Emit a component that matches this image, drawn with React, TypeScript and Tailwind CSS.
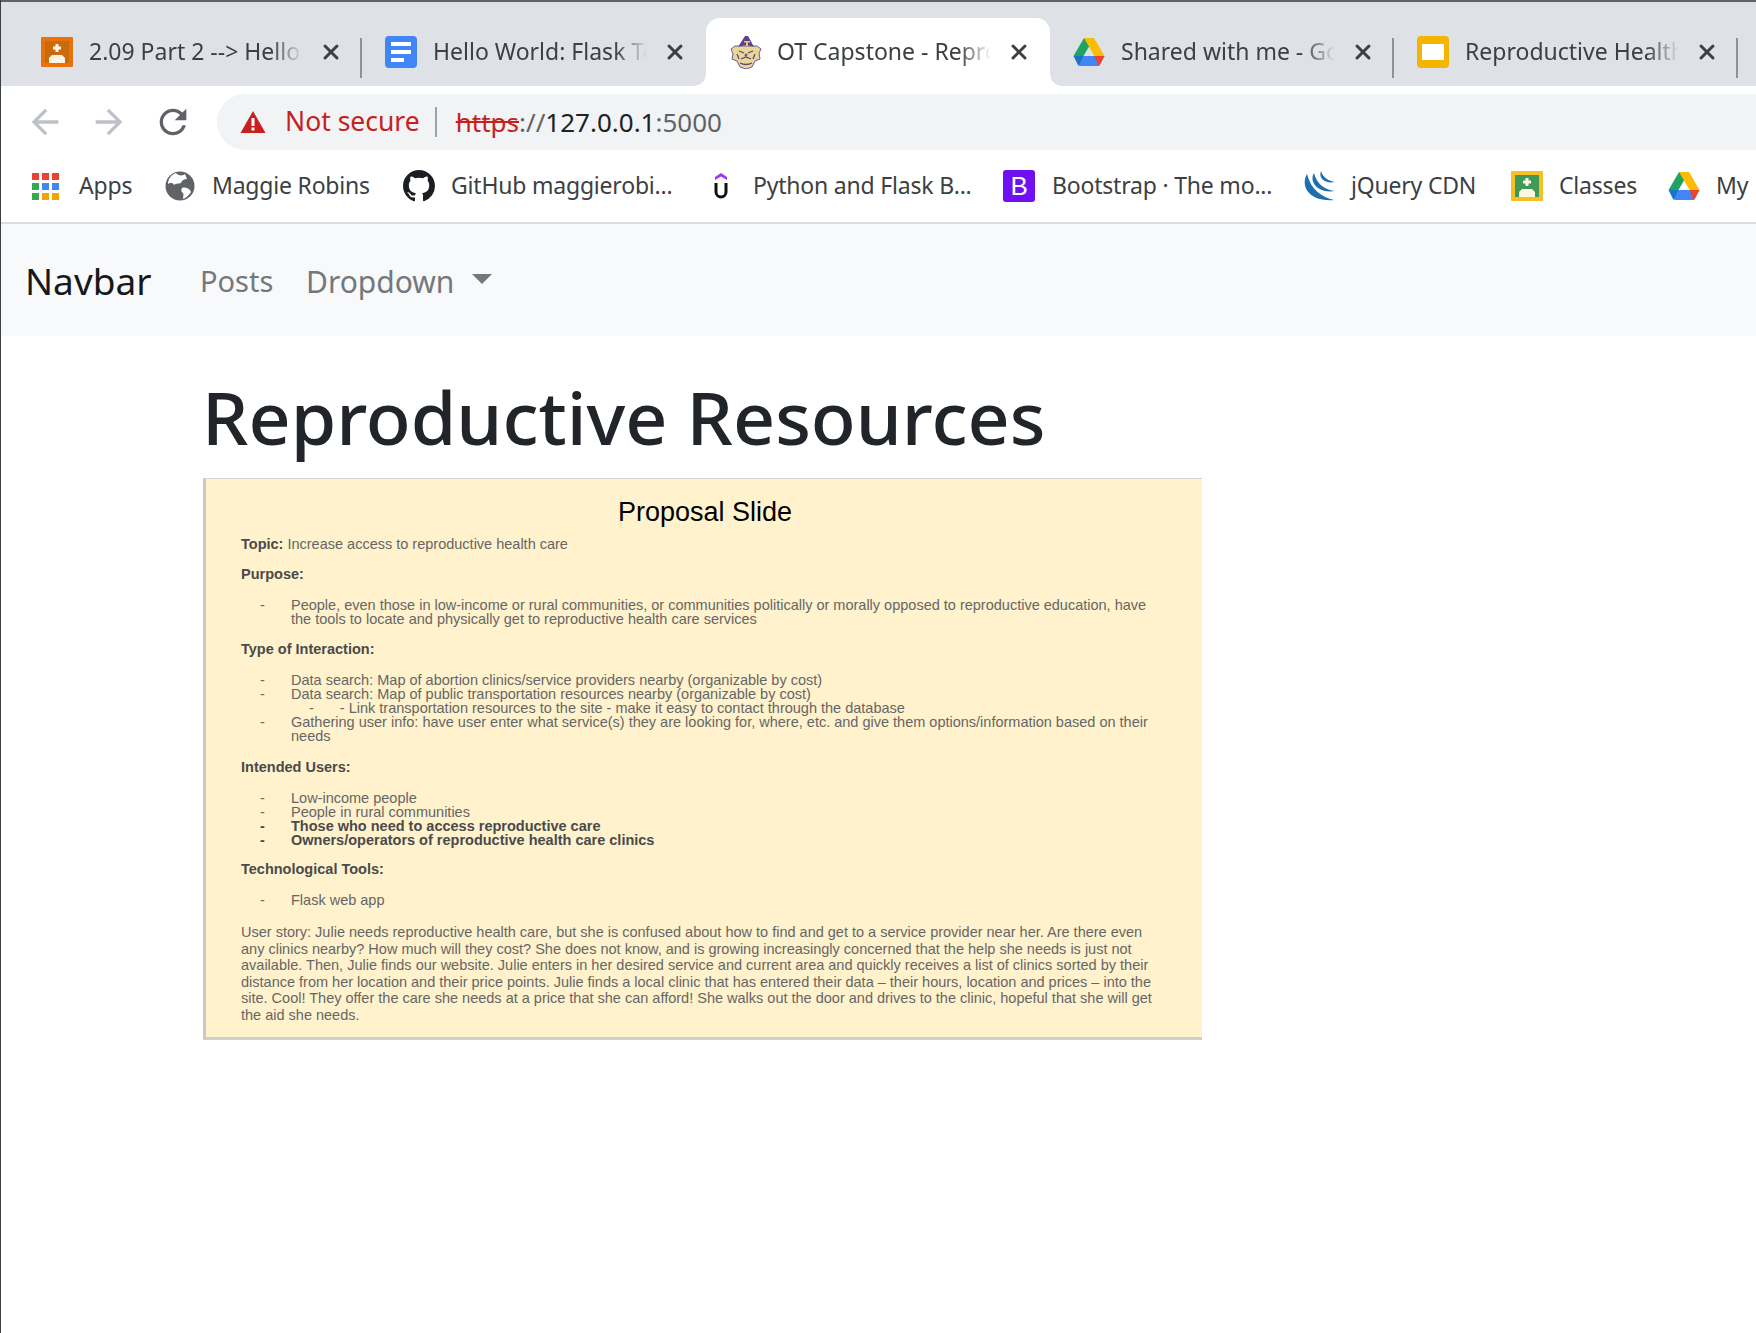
import { X } from 'lucide-react';

const UI = "font-['Noto_Sans',sans-serif]";
const SLIDE = "font-['Liberation_Sans',Arial,sans-serif]";

function ClassroomIcon({ outer, inner, fg }: { outer: string; inner: string; fg: string }) {
  return (
    <svg viewBox="0 0 32 30" className="w-8 h-[30px]">
      <rect width="32" height="30" rx="1" fill={outer} />
      <rect x="4" y="4" width="24" height="22" fill={inner} />
      <path d="M14.5 7h3v2.5H20v3h-2.500V15h-3v-2.500H12v-3h2.500z" fill={fg} />
      <path d="M8 26v-5l3-3h10l3 3v5z" fill={fg} />
    </svg>
  );
}

function DocsIcon() {
  return (
    <svg viewBox="0 0 32 32" className="w-8 h-8">
      <rect width="32" height="32" rx="4" fill="#4285f4" />
      <path d="M6 6h20v4H6zM6 14h20v4H6zM6 22h13v4H6z" fill="#fff" />
    </svg>
  );
}

function SlidesIcon() {
  return (
    <svg viewBox="0 0 32 32" className="w-8 h-8">
      <rect width="32" height="32" rx="4" fill="#f4b400" />
      <rect x="5" y="8" width="22" height="16" fill="#fff" />
    </svg>
  );
}

function DriveIcon() {
  return (
    <svg viewBox="0 0 32 28" className="w-8 h-7">
      <path d="M11 0h10L10.500 18H0.500z" fill="#1ea362" />
      <path d="M11 0h10l10.500 18h-10z" fill="#fbbc04" />
      <path d="M6 18h25.500l-5 9a2 2 0 0 1-1.700 1H7.500a2 2 0 0 1-1.700-1z" fill="#4285f4" />
      <path d="M0.500 18H10.500L5.500 28z" fill="#1a73c8" />
      <path d="M21.500 18h10l-4.500 8.500a3 3 0 0 1-1.500 1.500z" fill="#ea4335" />
    </svg>
  );
}

function Mascot() {
  return (
    <svg viewBox="0 0 34 34" className="w-[34px] h-[34px]">
      <path d="M6 11L2 14l2 5-1 5 5 2 3 6 6 2 6-2 3-6 5-2-1-6 2-4-4-3z" fill="#e9d69a" stroke="#6a5a9a" strokeWidth="1" />
      <path d="M9 12L16 1h3l6 11c-5-2-11-2-16 0z" fill="#5b3f95" />
      <path d="M15 6h6v1.500h-2V11h-2V7.500h-2z" fill="#f2c94c" />
      <path d="M10 16l5 2M24 16l-5 2M12 24l5-2 5 2M11 28c4 2 8 2 12 0M8 19l2 5M26 19l-2 5" stroke="#5a4a70" strokeWidth="1.300" fill="none" />
      <circle cx="17" cy="20" r="1.500" fill="#6a5a9a" />
    </svg>
  );
}

function AppsIcon() {
  const dots = ['#ea4335', '#ea4335', '#ea4335', '#34a853', '#4285f4', '#4285f4', '#34a853', '#f4a300', '#f4a300'];
  return (
    <div className="grid grid-cols-3 gap-[3px] w-[27px]">
      {dots.map((c, i) => (
        <svg key={i} viewBox="0 0 7 7" className="w-[7px] h-[7px]"><rect width="7" height="7" fill={c} /></svg>
      ))}
    </div>
  );
}

function GlobeIcon() {
  return (
    <svg viewBox="0 0 30 30" className="w-[30px] h-[30px]">
      <circle cx="15" cy="15" r="14.500" fill="#5f6368" />
      <path d="M11 2c2 3 7 3 9 1l2 5c-3 0-5 1-6 4-3 1-5 0-7 2-1-3-5-2-6-1 0-5 3-9 8-11zM17 17c3-1 6 0 8 2l1 2c-2 3-5 6-8 7 0-3 1-4 0-6-2-1-2-3-1-5z" fill="#fff" />
    </svg>
  );
}

function GithubIcon() {
  return (
    <svg viewBox="0 0 16 16" className="w-8 h-8" fill="#1b1f23">
      <path d="M8 0C3.580 0 0 3.580 0 8c0 3.540 2.290 6.530 5.470 7.590.4.070.55-.17.55-.38 0-.19-.01-.82-.01-1.490-2.010.37-2.530-.49-2.690-.94-.09-.23-.48-.94-.82-1.130-.28-.15-.68-.52-.01-.53.63-.01 1.080.58 1.230.82.72 1.210 1.870.87 2.330.66.070-.52.28-.87.51-1.070-1.780-.2-3.640-.89-3.640-3.950 0-.87.31-1.590.82-2.150-.08-.2-.36-1.020.08-2.120 0 0 .67-.21 2.200.82.64-.18 1.320-.27 2-.27s1.360.09 2 .27c1.530-1.040 2.200-.82 2.200-.82.44 1.100.16 1.920.08 2.120.51.560.82 1.270.82 2.150 0 3.070-1.870 3.750-3.650 3.950.29.250.54.730.54 1.480 0 1.070-.01 1.930-.01 2.200 0 .210.15.460.55.380A8.010 8.010 0 0 0 16 8c0-4.420-3.580-8-8-8z" />
    </svg>
  );
}

function UdemyIcon() {
  return (
    <svg viewBox="0 0 16 30" className="w-4 h-[30px]">
      <path d="M8 2l6 4v3L8 5.500 2 9V6z" fill="#a435f0" />
      <path d="M3 12v9a5 5 0 0 0 10 0v-9" fill="none" stroke="#111" strokeWidth="3" />
    </svg>
  );
}

function BootstrapIcon() {
  return (
    <div className="w-8 h-8 rounded-[3px] bg-[#6f10f2] flex items-center justify-center text-white text-[26px] leading-none font-['Liberation_Sans',sans-serif]">B</div>
  );
}

function JqueryIcon() {
  return (
    <svg viewBox="0 0 34 32" className="w-[34px] h-8" fill="#1f6fb0">
      <path d="M4 4C-3 16 6 32 31 30 19 27 8 20 4 4z" />
      <path d="M11 3C6 11 14 24 32 21 23 20 14 15 11 3z" />
      <path d="M18 1C15 9 23 14 32 12 26 11 20 8 18 1z" />
    </svg>
  );
}

const tabs = [
  { title: '2.09 Part 2 --> Hello', icon: <ClassroomIcon outer="#e8710a" inner="#c96a0c" fg="#fff4e4" /> },
  { title: 'Hello World: Flask Te', icon: <DocsIcon /> },
  { title: 'OT Capstone - Repro', icon: <Mascot />, active: true },
  { title: 'Shared with me - Go', icon: <DriveIcon /> },
  { title: 'Reproductive Health', icon: <SlidesIcon /> },
];

function Tab({ title, icon, active, sep }: { title: string; icon: React.ReactNode; active?: boolean; sep: boolean }) {
  return (
    <div className={`relative w-[344px] h-[68px] shrink-0 flex items-center rounded-t-[14px] ${active ? 'bg-white' : ''}`}>
      {active && <div className="absolute left-[-12px] bottom-0 w-3 h-3 bg-[radial-gradient(circle_at_0_0,#dee1e6_11.500px,#fff_12px)]" />}
      {active && <div className="absolute right-[-12px] bottom-0 w-3 h-3 bg-[radial-gradient(circle_at_100%_0,#dee1e6_11.500px,#fff_12px)]" />}
      <div className="w-[71px] pl-[23px] shrink-0 flex items-center">{icon}</div>
      <div className={`w-[214px] -mt-[2px] overflow-hidden whitespace-nowrap text-[23px] leading-8 text-[#3c4043] ${UI} [mask-image:linear-gradient(to_right,black_85%,transparent)]`}>{title}</div>
      <X className="ml-[16px] w-6 h-6 text-[#3c4043]" strokeWidth={3} />
      {sep && <div className="absolute right-0 top-[20px] w-[2px] h-[40px] bg-[#8e9297]" />}
    </div>
  );
}

const bookmarks = [
  { w: 'w-[164px]', pl: 'pl-[31px]', gap: 'w-[47px]', label: 'Apps', icon: <AppsIcon /> },
  { w: 'w-[238px]', pl: '', gap: 'w-[47px]', label: 'Maggie Robins', icon: <GlobeIcon /> },
  { w: 'w-[309px]', pl: '', gap: 'w-[48px]', label: 'GitHub maggierobi...', icon: <GithubIcon /> },
  { w: 'w-[291px]', pl: 'pl-[1px]', gap: 'w-[40px]', label: 'Python and Flask B...', icon: <UdemyIcon /> },
  { w: 'w-[300px]', pl: '', gap: 'w-[49px]', label: 'Bootstrap · The mo...', icon: <BootstrapIcon /> },
  { w: 'w-[208px]', pl: '', gap: 'w-[48px]', label: 'jQuery CDN', icon: <JqueryIcon /> },
  { w: 'w-[157px]', pl: '', gap: 'w-[48px]', label: 'Classes', icon: <ClassroomIcon outer="#f6bf26" inner="#3f9a55" fg="#fdf6e3" /> },
  { w: 'w-[88px]', pl: '', gap: 'w-[48px]', label: 'My', icon: <DriveIcon /> },
];

function SlideLine({ dash, bold, className, children }: { dash?: boolean; bold?: boolean; className?: string; children: React.ReactNode }) {
  return (
    <div className={`flex h-[14px] items-center whitespace-nowrap ${bold ? 'font-bold text-[#4a4a4a]' : 'text-[#666666]'} ${className ?? ''}`}>
      {dash && <span className="w-[29px] pl-[19px] shrink-0">-</span>}
      <span className={dash ? 'pl-[21px]' : ''}>{children}</span>
    </div>
  );
}

export default function App() {
  return (
    <div className="min-h-screen bg-white border-l border-[#3c4043] overflow-hidden">
      <div className="h-[2px] bg-[#5f6368]" />
      <div className="h-[84px] bg-[#dee1e6] pt-4 pl-[17px] flex overflow-hidden">
        {tabs.map((t, i) => (
          <Tab key={t.title} title={t.title} icon={t.icon} active={t.active} sep={i !== 1 && i !== 2} />
        ))}
      </div>

      <div className="h-[64px] pt-2 flex items-start">
        <div className="w-[216px] h-[56px] pl-[24px] flex items-center gap-[24px] shrink-0">
          <svg viewBox="0 0 24 24" className="w-10 h-10" fill="#bdc1c6"><path d="M20 11H7.830l5.590-5.590L12 4l-8 8 8 8 1.410-1.410L7.830 13H20v-2z" /></svg>
          <svg viewBox="0 0 24 24" className="w-10 h-10" fill="#bdc1c6"><path d="M12 4l-1.410 1.410L16.170 11H4v2h12.170l-5.580 5.590L12 20l8-8z" /></svg>
          <svg viewBox="0 0 24 24" className="w-10 h-10" fill="#5f6368"><path d="M17.650 6.350A7.958 7.958 0 0 0 12 4c-4.420 0-7.990 3.580-7.990 8s3.570 8 7.990 8c3.730 0 6.840-2.550 7.730-6h-2.080A5.990 5.990 0 0 1 12 18c-3.310 0-6-2.690-6-6s2.690-6 6-6c1.660 0 3.140.690 4.220 1.780L13 11h7V4l-2.350 2.350z" /></svg>
        </div>
        <div className={`flex-1 h-[56px] bg-[#f1f3f4] rounded-l-[28px] flex items-center pl-[23px] text-[26px] ${UI}`}>
          <svg viewBox="0 0 26 24" className="w-[26px] h-6 mr-[19px]">
            <path d="M13 1l12.500 22H.5z" fill="#c5221f" />
            <path d="M11.500 8h3v8h-3zM11.500 17.500h3v3h-3z" fill="#fff" />
          </svg>
          <span className="text-[#c5221f] text-[26.500px]">Not secure</span>
          <span className="w-[2px] h-[30px] bg-[#9aa0a6] ml-[15px] mr-[19px]" />
          <span className="text-[#c5221f] line-through">https</span>
          <span className="text-[#5f6368]">://</span>
          <span className="text-[#202124]">127.0.0.1</span>
          <span className="text-[#5f6368]">:5000</span>
        </div>
      </div>

      <div className={`h-[72px] flex items-center border-b-2 border-[#dadce0] box-content text-[23px] tracking-[-0.2px] text-[#3c4043] ${UI} overflow-hidden`}>
        {bookmarks.map((b) => (
          <div key={b.label} className={`${b.w} ${b.pl} shrink-0 flex items-center`}>
            <div className={`${b.gap} shrink-0 flex items-center`}>{b.icon}</div>
            <span className="whitespace-nowrap -mt-[2px]">{b.label}</span>
          </div>
        ))}
      </div>

      <nav className={`h-[112px] bg-[#f8f9fa] flex items-center pl-[24px] pt-[2px] ${UI}`}>
        <span className="text-[37px] text-[#16181b] w-[175px]">Navbar</span>
        <span className="text-[29px] text-[#74787c] w-[106px]">Posts</span>
        <span className="text-[30px] text-[#74787c]">Dropdown</span>
        <span className="ml-[18px] -mt-1 w-0 h-0 border-x-[10px] border-x-transparent border-t-[10px] border-t-[#74787c]" />
      </nav>

      <main className="pl-[201px]">
        <h1 className={`pt-[32px] h-[142px] text-[73.500px] leading-[98px] font-medium text-[#212529] whitespace-nowrap ${UI}`}>Reproductive Resources</h1>
        <div className={`ml-[1px] w-[999px] h-[562px] bg-[#fff2cc] border-l-[3px] border-l-[#c9c9c4] border-t border-t-[#d8d6cc] border-b-[3px] border-b-[#cfcfca] pl-[35px] ${SLIDE} text-[14.500px] leading-[14px]`}>
          <div className="w-[928px] text-center text-[27px] leading-[30px] text-black pt-[18px] h-[58px]">Proposal Slide</div>
          <div>
            <SlideLine><b className="text-[#4a4a4a]">Topic:</b> Increase access to reproductive health care</SlideLine>
            <SlideLine bold className="mt-[16px]">Purpose:</SlideLine>
            <SlideLine dash className="mt-[17px]">People, even those in low-income or rural communities, or communities politically or morally opposed to reproductive education, have</SlideLine>
            <SlideLine className="pl-[50px]">the tools to locate and physically get to reproductive health care services</SlideLine>
            <SlideLine bold className="mt-[16px]">Type of Interaction:</SlideLine>
            <SlideLine dash className="mt-[17px]">Data search: Map of abortion clinics/service providers nearby (organizable by cost)</SlideLine>
            <SlideLine dash>Data search: Map of public transportation resources nearby (organizable by cost)</SlideLine>
            <SlideLine className="pl-[68px]"><span className="pr-[26px]">-</span>- Link transportation resources to the site - make it easy to contact through the database</SlideLine>
            <SlideLine dash>Gathering user info: have user enter what service(s) they are looking for, where, etc. and give them options/information based on their</SlideLine>
            <SlideLine className="pl-[50px]">needs</SlideLine>
            <SlideLine bold className="mt-[17px]">Intended Users:</SlideLine>
            <SlideLine dash className="mt-[17px]">Low-income people</SlideLine>
            <SlideLine dash>People in rural communities</SlideLine>
            <SlideLine dash bold>Those who need to access reproductive care</SlideLine>
            <SlideLine dash bold>Owners/operators of reproductive health care clinics</SlideLine>
            <SlideLine bold className="mt-[15px]">Technological Tools:</SlideLine>
            <SlideLine dash className="mt-[17px]">Flask web app</SlideLine>
            <div className="mt-[17px] w-[920px] leading-[16.500px] text-[#666666] whitespace-nowrap">
              <p>User story: Julie needs reproductive health care, but she is confused about how to find and get to a service provider near her. Are there even</p>
              <p>any clinics nearby? How much will they cost? She does not know, and is growing increasingly concerned that the help she needs is just not</p>
              <p>available. Then, Julie finds our website. Julie enters in her desired service and current area and quickly receives a list of clinics sorted by their</p>
              <p>distance from her location and their price points. Julie finds a local clinic that has entered their data – their hours, location and prices – into the</p>
              <p>site. Cool! They offer the care she needs at a price that she can afford! She walks out the door and drives to the clinic, hopeful that she will get</p>
              <p>the aid she needs.</p>
            </div>
          </div>
        </div>
      </main>
    </div>
  );
}
